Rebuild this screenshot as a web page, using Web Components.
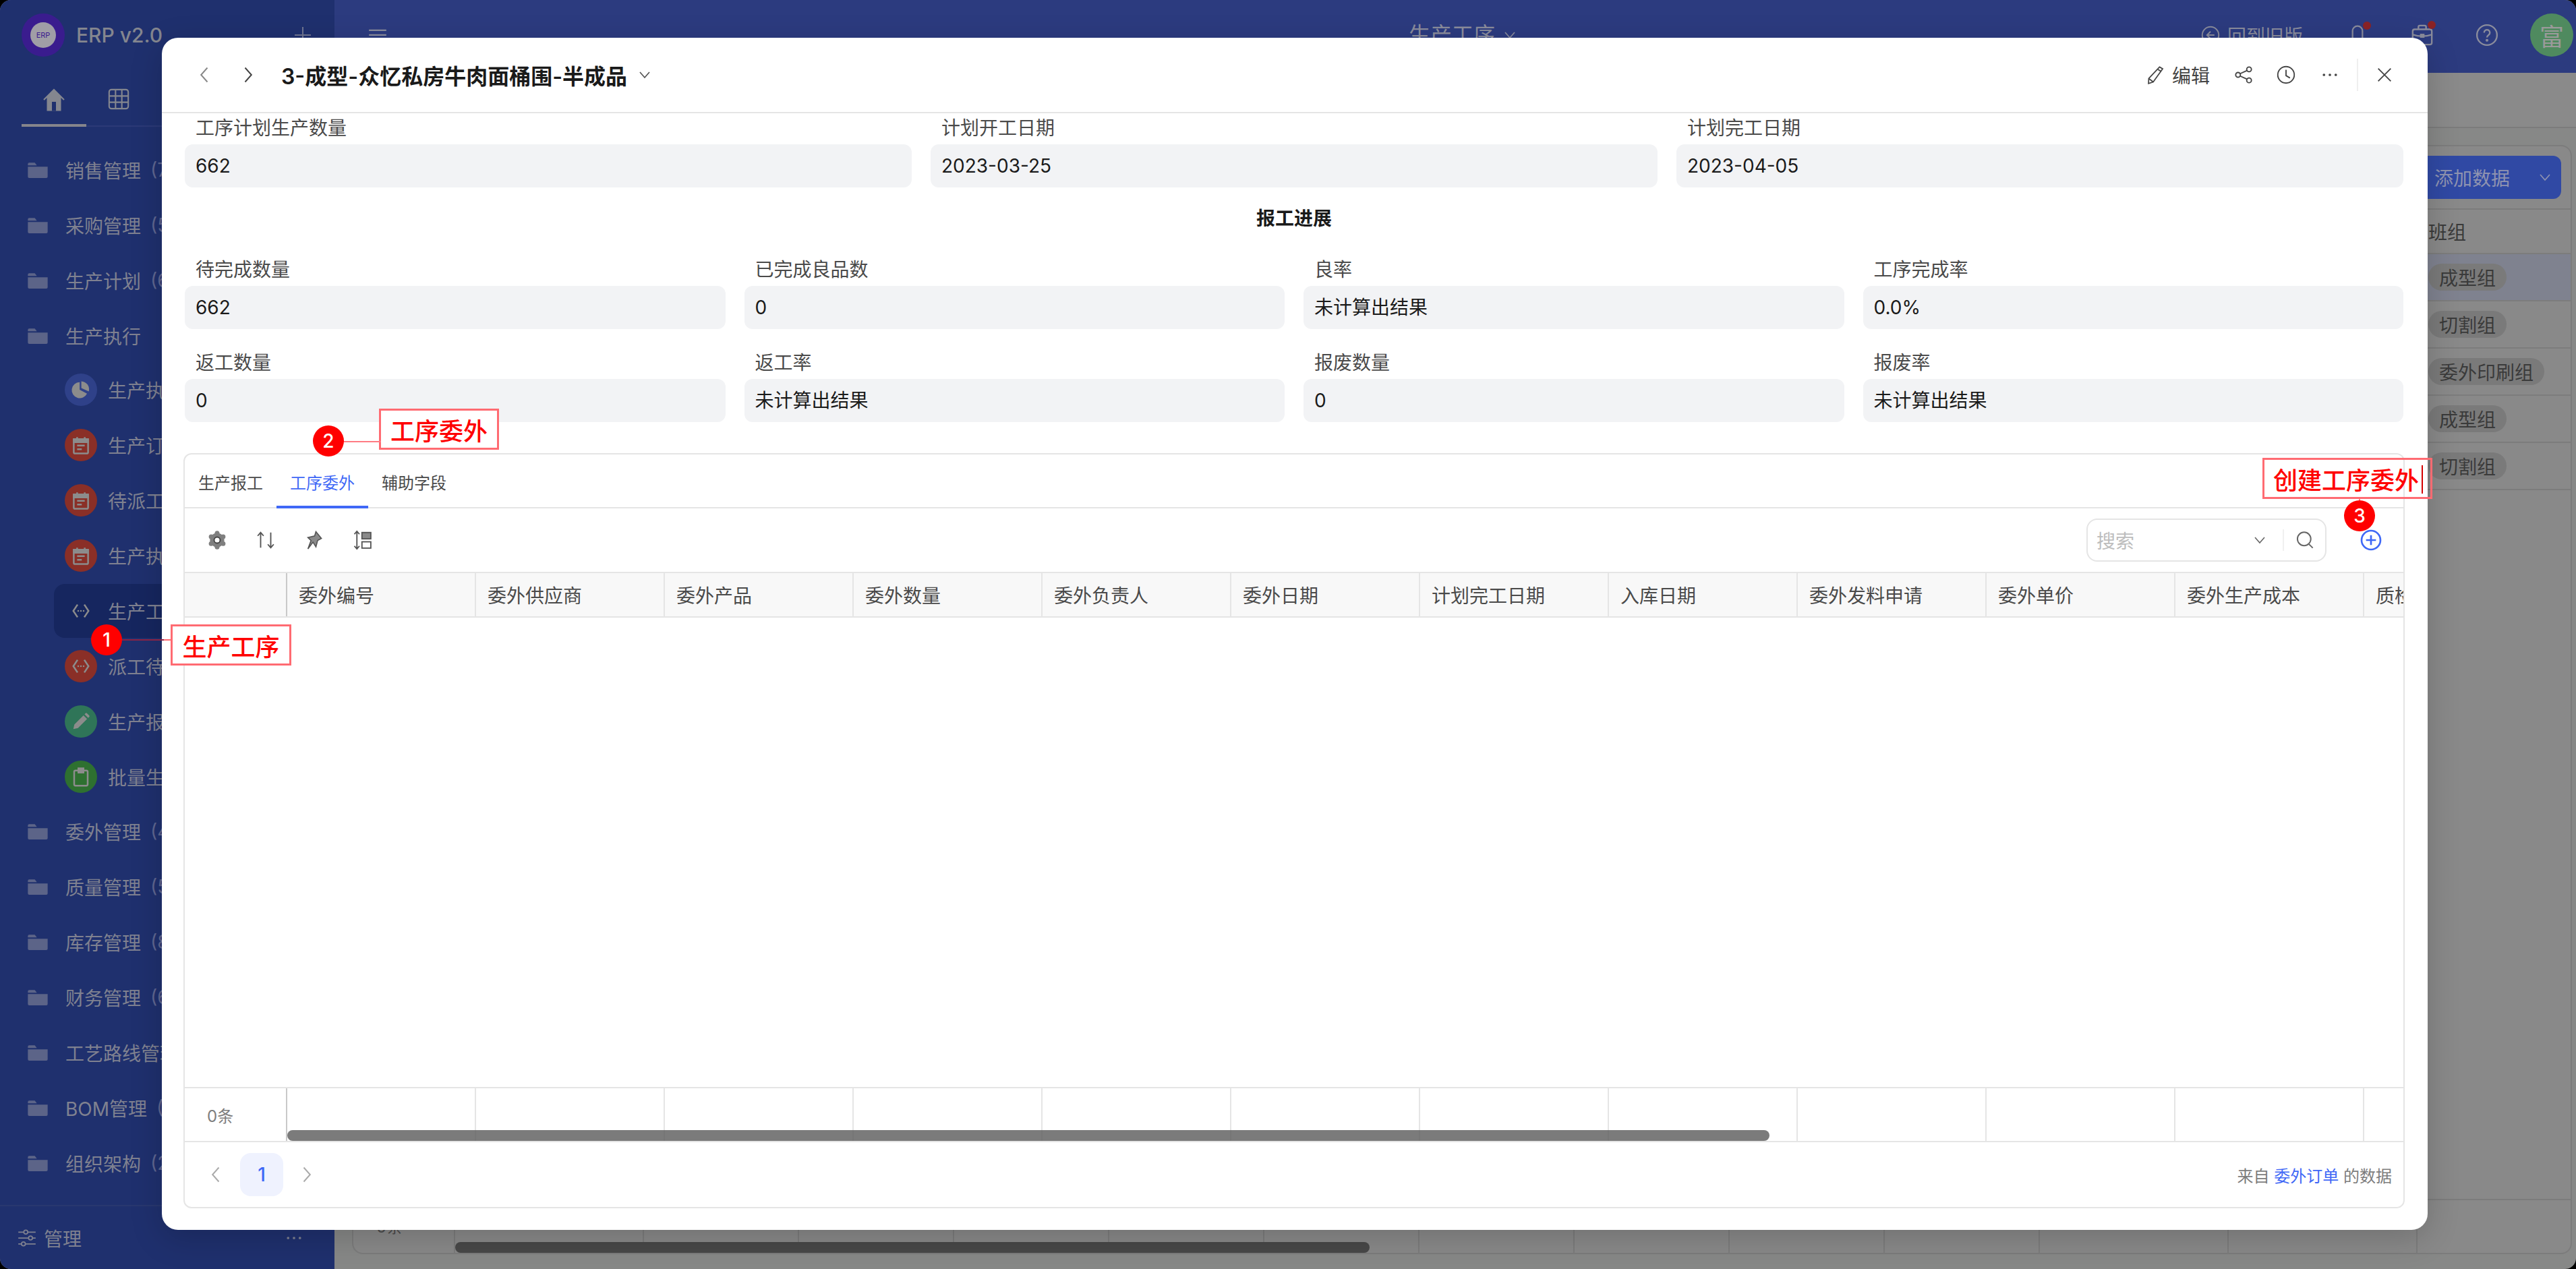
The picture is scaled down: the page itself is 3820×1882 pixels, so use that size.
<!DOCTYPE html>
<html lang="zh">
<head>
<meta charset="utf-8">
<title>ERP v2.0</title>
<style>
  html, body { margin: 0; width: 3820px; height: 1882px; overflow: hidden; background: #000; }
  body { font-family: Inter, "Noto Sans CJK SC", sans-serif; font-size: 28px; }
</style>
</head>
<body>
<erp-app></erp-app>
<script>
/*
Icons
*/
const ICONS = {
  chevL: '<path d="M15 3 7 12l8 9"/>',
  chevR: '<path d="M9 3l8 9-8 9"/>',
  chevD: '<path d="M5 8l7 8 7-8"/>',
  pencil: '<path d="M17.5 2l4 2.4L9.5 21 3.5 23l.3-6.3z"/><path d="M15.4 5.2l4 2.4M3.8 16.7l5.7 4.3"/>',
  share: '<circle cx="19" cy="5" r="3"/><circle cx="5" cy="12" r="3"/><circle cx="19" cy="19" r="3"/><path d="M16.4 6.5 7.6 10.5M7.6 13.5l8.8 4"/>',
  clock: '<circle cx="12" cy="12" r="10.5"/><path d="M12 5.5v7.5l5 3"/>',
  dots: '<g fill="currentColor" stroke="none"><circle cx="4.5" cy="12" r="1.6"/><circle cx="12" cy="12" r="1.6"/><circle cx="19.5" cy="12" r="1.6"/></g>',
  close: '<path d="M4 4l16 16M20 4 4 20"/>',
  gear: '<g fill="#7f7f7f" stroke="none"><circle cx="12" cy="12" r="8.5"/><circle cx="12" cy="3.8" r="2.8"/><circle cx="12" cy="20.2" r="2.8"/><circle cx="4.9" cy="7.9" r="2.8"/><circle cx="19.1" cy="7.9" r="2.8"/><circle cx="4.9" cy="16.1" r="2.8"/><circle cx="19.1" cy="16.1" r="2.8"/></g><circle cx="12" cy="12" r="3.6" fill="#fff" stroke="#444" stroke-width="1.5"/>',
  updown: '<path d="M6 21V3M2.500 7 6 3l3.500 4M18 3v18M14.500 17l3.500 4 3.500-4"/>',
  pin: '<path fill="#8a8a8a" stroke="#555" d="M14 2l6.5 8-4.5 2.5-2 7.5-3.5-5.5-6 8 3.7-10L4.5 9l8-2z"/>',
  rowh: '<path d="M5 1.5v21M2 5l3-3.5L8 5M2 19l3 3.5L8 19"/><rect x="11" y="3" width="10.5" height="7.5" fill="#8a8a8a"/><rect x="11" y="14" width="10.5" height="7.5"/>',
  search: '<circle cx="11" cy="10.5" r="8.5"/><path d="M17 17l5 5"/>',
  plus: '<circle cx="12" cy="12" r="10.5"/><path d="M12 6.5v11M6.5 12h11"/>',
  folder: '<g fill="currentColor" stroke="none"><path d="M1 5.5A1.5 1.5 0 0 1 2.5 4h6.2L11 7H1z"/><path d="M1 8.5h22v11a1.5 1.5 0 0 1-1.5 1.5h-19A1.5 1.5 0 0 1 1 19.5z"/></g>',
  home: '<path fill="currentColor" stroke="none" d="M12 1 1.5 11.5l1 1L5 10v13h14V10l2.500 2.500 1-1z"/><rect x="10" y="14" width="4" height="9" fill="#1f306e" stroke="none"/>',
  grid: '<rect x="2" y="2" width="20" height="20" rx="2.500"/><path d="M2 8.700h20M2 15.300h20M8.700 2v20M15.300 2v20"/>',
  pie: '<g fill="currentColor" stroke="none"><path d="M10.500 3a9.500 9.500 0 1 0 8.700 13.600L10.500 12z"/><path d="M12.500 2a9.500 9.500 0 0 1 8.800 12L12.500 10z"/></g>',
  cal: '<rect x="3.500" y="5" width="17" height="17" rx="1.500"/><path d="M7.500 2.500V6M16.500 2.500V6"/><path fill="currentColor" d="M3.500 5h17v3.500h-17z"/><path d="M7.500 12.500h9M7.500 17h5.500"/>',
  code: '<path d="M8 4.500 3 12l5 7.500M16 4.500 21 12l-5 7.500"/><g fill="currentColor" stroke="none"><circle cx="8.800" cy="12" r="1"/><circle cx="12" cy="12" r="1"/><circle cx="15.200" cy="12" r="1"/></g>',
  pen: '<path fill="currentColor" stroke="none" d="M3 21l1.200-5.500L15 4.700l4.300 4.300L8.500 19.800zM16.300 3.400l1.300-1.300a1 1 0 0 1 1.400 0l2.900 2.900a1 1 0 0 1 0 1.400l-1.300 1.300z"/>',
  clip: '<rect x="4" y="4.500" width="16" height="18" rx="1.500"/><path fill="currentColor" d="M9 2h6v5H9z"/>',
  sliders: '<path d="M1 4.500h7M13 4.500h10M1 12h13M19 12h4M1 19.500h4M10 19.500h13"/><circle cx="10.500" cy="4.500" r="2.500"/><circle cx="16.500" cy="12" r="2.500"/><circle cx="7.500" cy="19.500" r="2.500"/>',
  bell: '<path d="M12 2a5.500 5.500 0 0 0-5.500 5.500V17L4 20h16l-2.500-3V7.500A5.500 5.500 0 0 0 12 2z"/>',
  case: '<rect x="2" y="6" width="20" height="16" rx="2"/><path d="M8 6V3.500A1.500 1.500 0 0 1 9.500 2h5A1.500 1.500 0 0 1 16 3.500V6M2 11.500c6 2 14 2 20 0"/><rect x="10.500" y="11.500" width="3" height="2.500" fill="currentColor"/>',
  help: '<circle cx="12" cy="12" r="10.500"/><path d="M9 9.500a3 3 0 1 1 4.600 2.500c-1 .7-1.600 1.300-1.600 2.500"/><circle cx="12" cy="17.500" r=".6" fill="currentColor"/>',
  back: '<circle cx="12" cy="12" r="10.500"/><path d="M12 7.500 7.500 12l4.500 4.500M7.500 12H17"/>',
  menu: '<path d="M1 5h22M1 11h22M1 17h22"/>',
};

class ErpIcon extends HTMLElement {
  connectedCallback() {
    const size = this.getAttribute('size') || 28;
    const stroke = this.getAttribute('stroke') || 1.7;
    this.attachShadow({ mode: 'open' });
    this.shadowRoot.innerHTML = `
      <style>
        :host { display: inline-flex; flex: none; width: ${size}px; height: ${size}px; }
        svg { width: 100%; height: 100%; display: block; }
      </style>
      <svg viewBox="0 0 24 24" fill="none" stroke="currentColor" stroke-width="${stroke}">${ICONS[this.getAttribute('name')] || ''}</svg>`;
  }
}
customElements.define('erp-icon', ErpIcon);

/*
Sidebar
*/
class SideItem extends HTMLElement {
  connectedCallback() {
    const icon = this.getAttribute('icon') || 'folder';
    const tint = this.getAttribute('tint');
    const sub = this.hasAttribute('sub');
    const count = this.getAttribute('count');
    this.attachShadow({ mode: 'open' });
    this.shadowRoot.innerHTML = `
      <style>
        :host { display: flex; align-items: center; height: 82px; white-space: nowrap; color: #7f8190; padding-left: 40px; }
        :host([sub]) { padding-left: 96px; }
        :host([active]) { height: 80px; margin: 1px 0; margin-left: 80px; padding-left: 16px; background: #16265f; border-radius: 16px; }
        .badge { width: 48px; height: 48px; border-radius: 50%; display: flex; align-items: center; justify-content: center; color: #8c8c8c; margin-right: 16px; flex: none; }
        .plain { margin-right: 25px; color: #5c6488; display: flex; }
        .count { color: #5f6690; margin-left: 14px; }
      </style>
      ${sub
        ? `<span class="badge" style="background:${tint || 'transparent'}"><erp-icon name="${icon}" size="30" stroke="2"></erp-icon></span>`
        : `<span class="plain"><erp-icon name="folder" size="32"></erp-icon></span>`}
      <slot></slot>${count ? `<span class="count">(${count})</span>` : ''}`;
  }
}
customElements.define('side-item', SideItem);

class ErpSidebar extends HTMLElement {
  constructor() {
    super();
    this.attachShadow({ mode: 'open' });
    this.shadowRoot.innerHTML = `
      <style>
        :host { display: flex; flex-direction: column; width: 496px; flex: none; height: 100%; background: #1f306e; color: #84868f; overflow: hidden; box-sizing: border-box; }
        .head { height: 104px; display: flex; align-items: center; padding: 0 35px 0 32px; flex: none; }
        .logo { width: 64px; height: 64px; border-radius: 50%; background: #3a1c8e; display: flex; align-items: center; justify-content: center; flex: none; }
        .logo span { width: 38px; height: 38px; border-radius: 50%; background: #a09ea6; color: #3a1c8e; font-size: 11px; display: flex; align-items: center; justify-content: center; }
        .name { font-size: 30px; font-weight: 500; margin-left: 17px; flex: 1; }
        .tabs { height: 84px; margin-left: 32px; display: flex; border-bottom: 2px solid #2c3a77; box-sizing: border-box; flex: none; }
        .tabs div { width: 96px; height: 84px; box-sizing: border-box; padding-top: 26px; display: flex; justify-content: center; }
        .tabs .on { border-bottom: 4px solid #85858c; }
        .menu { flex: 1; padding-top: 23px; min-height: 0; overflow: hidden; }
        .subs { margin: -2px 0 -1px; }
        .foot { height: 95px; flex: none; border-top: 2px solid #29386f; box-sizing: border-box; display: flex; align-items: center; padding: 0 46px 0 26px; color: #7f8190; }
        .foot span { flex: 1; margin-left: 11px; }
      </style>
      <div class="head">
        <div class="logo"><span>ERP</span></div>
        <div class="name">ERP v2.0</div>
        <svg width="24" height="24" viewBox="0 0 24 24" stroke="#6f7590" stroke-width="2"><path d="M12 0v24M0 12h24"/></svg>
      </div>
      <div class="tabs">
        <div class="on"><erp-icon name="home" size="36"></erp-icon></div>
        <div><erp-icon name="grid" size="34" stroke="1.500"></erp-icon></div>
      </div>
      <div class="menu">
        <side-item count="7">销售管理</side-item>
        <side-item count="5">采购管理</side-item>
        <side-item count="6">生产计划</side-item>
        <side-item>生产执行</side-item>
        <div class="subs">
          <side-item sub icon="pie" tint="#2f4189">生产执行</side-item>
          <side-item sub icon="cal" tint="#8a2f27">生产订单</side-item>
          <side-item sub icon="cal" tint="#8a2f27">待派工</side-item>
          <side-item sub icon="cal" tint="#8a2f27">生产执行</side-item>
          <side-item sub active icon="code">生产工序</side-item>
          <side-item sub icon="code" tint="#8a2f27">派工待</side-item>
          <side-item sub icon="pen" tint="#2f7558">生产报工</side-item>
          <side-item sub icon="clip" tint="#2e7030">批量生产</side-item>
        </div>
        <side-item count="4">委外管理</side-item>
        <side-item count="5">质量管理</side-item>
        <side-item count="8">库存管理</side-item>
        <side-item count="6">财务管理</side-item>
        <side-item>工艺路线管理</side-item>
        <side-item count="3">BOM管理</side-item>
        <side-item count="2">组织架构</side-item>
      </div>
      <div class="foot">
        <erp-icon name="sliders" size="28" stroke="1.500"></erp-icon>
        <span>管理</span>
        <erp-icon name="dots" size="28"></erp-icon>
      </div>`;
  }
}
customElements.define('erp-sidebar', ErpSidebar);

/*
Page behind the dialog
*/
class ErpTopbar extends HTMLElement {
  constructor() {
    super();
    this.attachShadow({ mode: 'open' });
    this.shadowRoot.innerHTML = `
      <style>
        :host { display: grid; grid-template-columns: 1fr auto 1fr; align-items: start; height: 108px; flex: none; background: #2c3b7f; color: #8a8c9c; padding-top: 32px; box-sizing: border-box; }
        .left { padding: 7px 0 0 50px; }
        .title { font-size: 32px; display: flex; align-items: center; gap: 10px; margin-left: 24px; line-height: 40px; }
        .right { display: flex; align-items: center; justify-content: flex-end; padding-right: 4px; margin-top: -12px; height: 64px; }
        .old { display: flex; align-items: center; gap: 11px; margin-right: 61px; }
        .bx { position: relative; display: flex; width: 40px; justify-content: center; margin-right: 56px; }
        .bx i { position: absolute; left: 28px; top: -4px; width: 12px; height: 12px; border-radius: 50%; background: #8a2326; }
        .av { width: 64px; height: 64px; border-radius: 50%; background: #4f8a5f; color: #9a9a9a; font-size: 36px; display: flex; align-items: center; justify-content: center; margin-left: -12px; }
      </style>
      <div class="left"><erp-icon name="menu" size="28" stroke="1.800"></erp-icon></div>
      <div class="title">生产工序 <erp-icon name="chevD" size="24"></erp-icon></div>
      <div class="right">
        <div class="old"><erp-icon name="back" size="28"></erp-icon>回到旧版</div>
        <div class="bx"><erp-icon name="bell" size="32"></erp-icon><i></i></div>
        <div class="bx"><erp-icon name="case" size="34"></erp-icon><i></i></div>
        <div class="bx"><erp-icon name="help" size="34"></erp-icon></div>
        <div class="av">富</div>
      </div>`;
  }
}
customElements.define('erp-topbar', ErpTopbar);

class BackTable extends HTMLElement {
  constructor() {
    super();
    this.attachShadow({ mode: 'open' });
    const groups = ['成型组', '切割组', '委外印刷组', '成型组', '切割组'];
    const rows = groups.map((g, i) => `<div class="row${i === 0 ? ' first' : ''}"><span class="pill">${g}</span></div>`).join('');
    const cols = ['', ...Array(12).fill('')].map(() => '<span></span>').join('');
    this.shadowRoot.innerHTML = `
      <style>
        :host { display: flex; flex-direction: column; flex: 1; min-height: 0; margin: 0 6px 22px 26px; background: #898989; border: 2px solid #7c7c7c; border-radius: 16px; box-sizing: border-box; color: #3a3a3a; overflow: hidden; position: relative; }
        .bar { height: 92px; flex: none; display: flex; justify-content: flex-end; align-items: center; padding-right: 14px; border-bottom: 2px solid #7c7c7c; box-sizing: content-box; }
        .btn { height: 64px; background: #3049a4; color: #8f93b0; border-radius: 12px; display: flex; align-items: center; padding: 0 12px 0 24px; gap: 40px; }
        .row, .th { height: 68px; display: flex; align-items: center; padding-left: 3077px; border-bottom: 2px solid #7c7c7c; white-space: nowrap; flex: none; }
        .th { height: 64px; }
        .first { background: #7f828f; }
        .pill { height: 40px; border-radius: 20px; background: #7a7a7a; padding: 0 16px; display: flex; align-items: center; }
        .fill { flex: 1; }
        .foot { height: 78px; flex: none; border-top: 2px solid #7c7c7c; display: grid; grid-template-columns: 151px 280px repeat(9, 230px) 280px 280px 1fr; position: relative; color: #4c4c4c; font-size: 24px; }
        .foot span { border-right: 2px solid #7c7c7c; }
        .zero { position: absolute; left: 34px; top: 20px; }
        .scroll { position: absolute; left: 151px; bottom: 0; width: 1356px; height: 16px; border-radius: 8px; background: #484848; }
      </style>
      <div class="bar"><div class="btn">添加数据 <erp-icon name="chevD" size="24"></erp-icon></div></div>
      <div class="th">班组</div>
      ${rows}
      <div class="fill"></div>
      <div class="foot">${cols}<div class="zero">0条</div><div class="scroll"></div></div>`;
  }
}
customElements.define('back-table', BackTable);

/*
Dialog pieces
*/
class FieldBox extends HTMLElement {
  connectedCallback() {
    this.attachShadow({ mode: 'open' });
    this.shadowRoot.innerHTML = `
      <style>
        :host { display: block; min-width: 0; }
        .label { height: 40px; line-height: 40px; padding-left: 16px; color: #4a4a4a; margin-bottom: 4px; }
        .value { height: 64px; line-height: 64px; border-radius: 12px; background: #f2f3f5; padding-left: 16px; color: #1a1a1a; }
      </style>
      <div class="label">${this.getAttribute('label')}</div>
      <div class="value"><slot></slot></div>`;
  }
}
customElements.define('field-box', FieldBox);

class RecordTable extends HTMLElement {
  constructor() {
    super();
    this.attachShadow({ mode: 'open' });
    const names = ['委外编号', '委外供应商', '委外产品', '委外数量', '委外负责人', '委外日期', '计划完工日期', '入库日期', '委外发料申请', '委外单价', '委外生产成本', '质检'];
    const heads = names.map(n => `<div class="c">${n}</div>`).join('');
    const foots = names.map(() => '<div class="c"></div>').join('');
    this.shadowRoot.innerHTML = `
      <style>
        :host { display: flex; flex-direction: column; flex: 1; min-height: 0; overflow: hidden; }
        .grid { display: grid; grid-template-columns: 152px repeat(12, 280px); }
        .head { height: 64px; background: #f8f8f8; border-top: 2px solid #e5e5e5; border-bottom: 2px solid #e5e5e5; color: #4a4a4a; flex: none; }
        .c { border-right: 2px solid #e5e5e5; box-sizing: border-box; padding-left: 17px; display: flex; align-items: center; white-space: nowrap; }
        .first { border-right-color: #c9c9c9; }
        .empty { flex: 1; }
        .foot { height: 78px; border-top: 2px solid #e5e5e5; border-bottom: 2px solid #e5e5e5; flex: none; position: relative; font-size: 24px; color: #7d7d7d; }
        .foot .first { padding-left: 33px; }
        .bar { position: absolute; left: 152px; bottom: 0; width: 2198px; height: 16px; border-radius: 8px; background: rgba(90, 90, 90, .8); }
      </style>
      <div class="grid head"><div class="c first"></div>${heads}</div>
      <div class="empty"></div>
      <div class="grid foot"><div class="c first">0条</div>${foots}<div class="bar"></div></div>`;
  }
}
customElements.define('record-table', RecordTable);

class RecordCard extends HTMLElement {
  constructor() {
    super();
    this.attachShadow({ mode: 'open' });
    this.shadowRoot.innerHTML = `
      <style>
        :host { display: flex; flex-direction: column; height: 1120px; margin: 46px -2px 0; border: 2px solid #e5e5e5; border-radius: 12px; box-sizing: border-box; overflow: hidden; background: #fff; }
        .tabs { height: 80px; flex: none; display: flex; border-bottom: 2px solid #e5e5e5; box-sizing: border-box; font-size: 24px; color: #4a4a4a; }
        .tabs div { height: 80px; width: 136px; box-sizing: border-box; display: flex; align-items: center; justify-content: center; }
        .tabs .on { color: #3f68f6; border-bottom: 4px solid #3f68f6; padding-top: 4px; }
        .tools { height: 94px; flex: none; display: flex; align-items: center; padding: 0 32px 0 33px; color: #555; }
        .tools erp-icon { margin-right: 42px; }
        .gap { flex: 1; }
        .search { width: 356px; height: 64px; box-sizing: border-box; border: 2px solid #e5e5e5; border-radius: 16px; display: flex; align-items: center; padding: 0 16px 0 13px; color: #bdbdbd; margin-right: 50px; }
        .search span { flex: 1; }
        .search i { width: 2px; height: 32px; background: #f0f0f0; margin: 0 17px 0 22px; }
        .tools .search erp-icon { margin: 0; color: #666; }
        .tools .add { color: #3f68f6; margin: 0; }
        .pager { height: 96px; flex: none; display: flex; align-items: center; padding: 0 17px 0 27px; color: #aaa; }
        .pg { width: 40px; display: flex; justify-content: center; }
        .num { width: 64px; height: 64px; border-radius: 16px; background: #eff2fe; color: #3f68f6; font-weight: 500; display: flex; align-items: center; justify-content: center; margin: 0 14px 0 15px; }
        .src { margin-left: auto; font-size: 24px; color: #7d7d7d; }
        .src b { font-weight: 400; color: #3f68f6; }
      </style>
      <div class="tabs"><div>生产报工</div><div class="on">工序委外</div><div>辅助字段</div></div>
      <div class="tools">
        <erp-icon name="gear" size="30" stroke="1.300"></erp-icon>
        <erp-icon name="updown" size="30" stroke="1.500"></erp-icon>
        <erp-icon name="pin" size="30" stroke="1.300"></erp-icon>
        <erp-icon name="rowh" size="30" stroke="1.500"></erp-icon>
        <div class="gap"></div>
        <div class="search"><span>搜索</span><erp-icon name="chevD" size="24" stroke="1.600"></erp-icon><i></i><erp-icon name="search" size="28" stroke="1.700"></erp-icon></div>
        <erp-icon class="add" name="plus" size="32" stroke="2"></erp-icon>
      </div>
      <record-table></record-table>
      <div class="pager">
        <div class="pg"><erp-icon name="chevL" size="28"></erp-icon></div>
        <div class="num">1</div>
        <div class="pg"><erp-icon name="chevR" size="28"></erp-icon></div>
        <div class="src">来自 <b>委外订单</b> 的数据</div>
      </div>`;
  }
}
customElements.define('record-card', RecordCard);

class ErpDialog extends HTMLElement {
  constructor() {
    super();
    this.attachShadow({ mode: 'open' });
    this.shadowRoot.innerHTML = `
      <style>
        :host { position: absolute; left: 240px; top: 56px; width: 3360px; height: 1768px; display: flex; flex-direction: column; background: #fff; border-radius: 24px; box-shadow: 0 12px 48px rgba(0, 0, 0, .18); overflow: hidden; color: #444; }
        .head { height: 112px; flex: none; border-bottom: 2px solid #e5e5e5; box-sizing: border-box; display: flex; align-items: center; padding: 0 44px; }
        .ic { width: 40px; display: flex; justify-content: center; }
        .title { font-size: 32px; font-weight: 600; color: #1a1a1a; margin-left: 30px; white-space: nowrap; }
        .gap { flex: 1; }
        .edit { display: flex; align-items: center; gap: 11px; margin-right: 30px; }
        .div { width: 2px; height: 48px; background: #efefef; margin: 0 20px 0 20px; }
        .body { flex: 1; min-height: 0; padding: 2px 36px 0 34px; }
        .three, .four { display: grid; gap: 30px 28px; }
        .three { grid-template-columns: repeat(3, 1fr); }
        .four { grid-template-columns: repeat(4, 1fr); }
        h3 { margin: 26px 0 36px; font-size: 28px; font-weight: 700; line-height: 40px; height: 40px; text-align: center; color: #1a1a1a; }
      </style>
      <div class="head">
        <span class="ic" style="color:#888"><erp-icon name="chevL" size="28"></erp-icon></span>
        <span class="ic" style="margin-left:23px"><erp-icon name="chevR" size="28"></erp-icon></span>
        <span class="title">3-成型-众忆私房牛肉面桶围-半成品</span>
        <erp-icon name="chevD" size="24" style="margin-left:14px;color:#555"></erp-icon>
        <div class="gap"></div>
        <span class="edit"><erp-icon name="pencil" size="28" stroke="1.500"></erp-icon>编辑</span>
        <span class="ic"><erp-icon name="share" size="28" stroke="1.600"></erp-icon></span>
        <span class="ic" style="margin-left:23px"><erp-icon name="clock" size="28" stroke="1.600"></erp-icon></span>
        <span class="ic" style="margin-left:25px"><erp-icon name="dots" size="28"></erp-icon></span>
        <span class="div"></span>
        <span class="ic" style="margin-left:-1px"><erp-icon name="close" size="28" stroke="1.600"></erp-icon></span>
      </div>
      <div class="body">
        <div class="three">
          <field-box label="工序计划生产数量">662</field-box>
          <field-box label="计划开工日期">2023-03-25</field-box>
          <field-box label="计划完工日期">2023-04-05</field-box>
        </div>
        <h3>报工进展</h3>
        <div class="four">
          <field-box label="待完成数量">662</field-box>
          <field-box label="已完成良品数">0</field-box>
          <field-box label="良率">未计算出结果</field-box>
          <field-box label="工序完成率">0.0%</field-box>
          <field-box label="返工数量">0</field-box>
          <field-box label="返工率">未计算出结果</field-box>
          <field-box label="报废数量">0</field-box>
          <field-box label="报废率">未计算出结果</field-box>
        </div>
        <record-card></record-card>
      </div>`;
  }
}
customElements.define('erp-dialog', ErpDialog);

/*
Red notes drawn over the screenshot
*/
class NoteTag extends HTMLElement {
  connectedCallback() {
    this.attachShadow({ mode: 'open' });
    this.shadowRoot.innerHTML = `
      <style>
        :host { position: absolute; left: var(--x); top: var(--y); width: var(--w); height: var(--h); box-sizing: border-box; border: 3px solid #ff6b72; background: var(--bg, #fff); color: #f00; font-size: 36px; font-weight: 500; display: flex; align-items: center; justify-content: center; white-space: nowrap; padding-right: var(--pr, 0); }
        .dot { position: absolute; left: var(--dx); top: var(--dy); width: 46px; height: 46px; border-radius: 50%; background: #f00; color: #fff; font-size: 28px; font-weight: 500; display: flex; align-items: center; justify-content: center; }
        .line { position: absolute; left: var(--lx); top: var(--ly); width: var(--lw); height: var(--lh); background: var(--lc, #ff7c84); }
      </style>
      <span class="line"></span><span class="dot">${this.getAttribute('n')}</span><slot></slot>`;
  }
}
customElements.define('note-tag', NoteTag);

/*
App
*/
class ErpApp extends HTMLElement {
  constructor() {
    super();
    this.attachShadow({ mode: 'open' });
    this.shadowRoot.innerHTML = `
      <style>
        :host { display: flex; position: relative; width: 3820px; height: 1882px; border-radius: 16px; overflow: hidden; background: #878887; }
        main { flex: 1; min-width: 0; display: flex; flex-direction: column; }
        .strip { height: 82px; flex: none; border-bottom: 2px solid #7c7c7c; box-sizing: border-box; margin-bottom: 25px; background: #8a8a8a; }
      </style>
      <erp-sidebar></erp-sidebar>
      <main>
        <erp-topbar></erp-topbar>
        <div class="strip"></div>
        <back-table></back-table>
      </main>
      <erp-dialog></erp-dialog>
      <note-tag n="1" style="--x:253px;--y:926px;--w:179px;--h:61px;--dx:-121px;--dy:-3px;--lx:-75px;--ly:19px;--lw:75px;--lh:2px;--lc:linear-gradient(to right,#8a2345 62px,#ff6b72 62px)">生产工序</note-tag>
      <note-tag n="2" style="--x:562px;--y:606px;--w:178px;--h:61px;--dx:-101px;--dy:22px;--lx:-56px;--ly:45px;--lw:56px;--lh:2px">工序委外</note-tag>
      <note-tag n="3" style="--x:3355px;--y:679px;--w:252px;--h:61px;--bg:transparent;--pr:4px;--dx:118px;--dy:60px;--lx:140px;--ly:58px;--lw:2px;--lh:3px">创建工序委外<span style="position:absolute;left:233px;top:8px;width:2px;height:42px;background:#d40000"></span></note-tag>`;
  }
}
customElements.define('erp-app', ErpApp);
</script>
</body>
</html>
